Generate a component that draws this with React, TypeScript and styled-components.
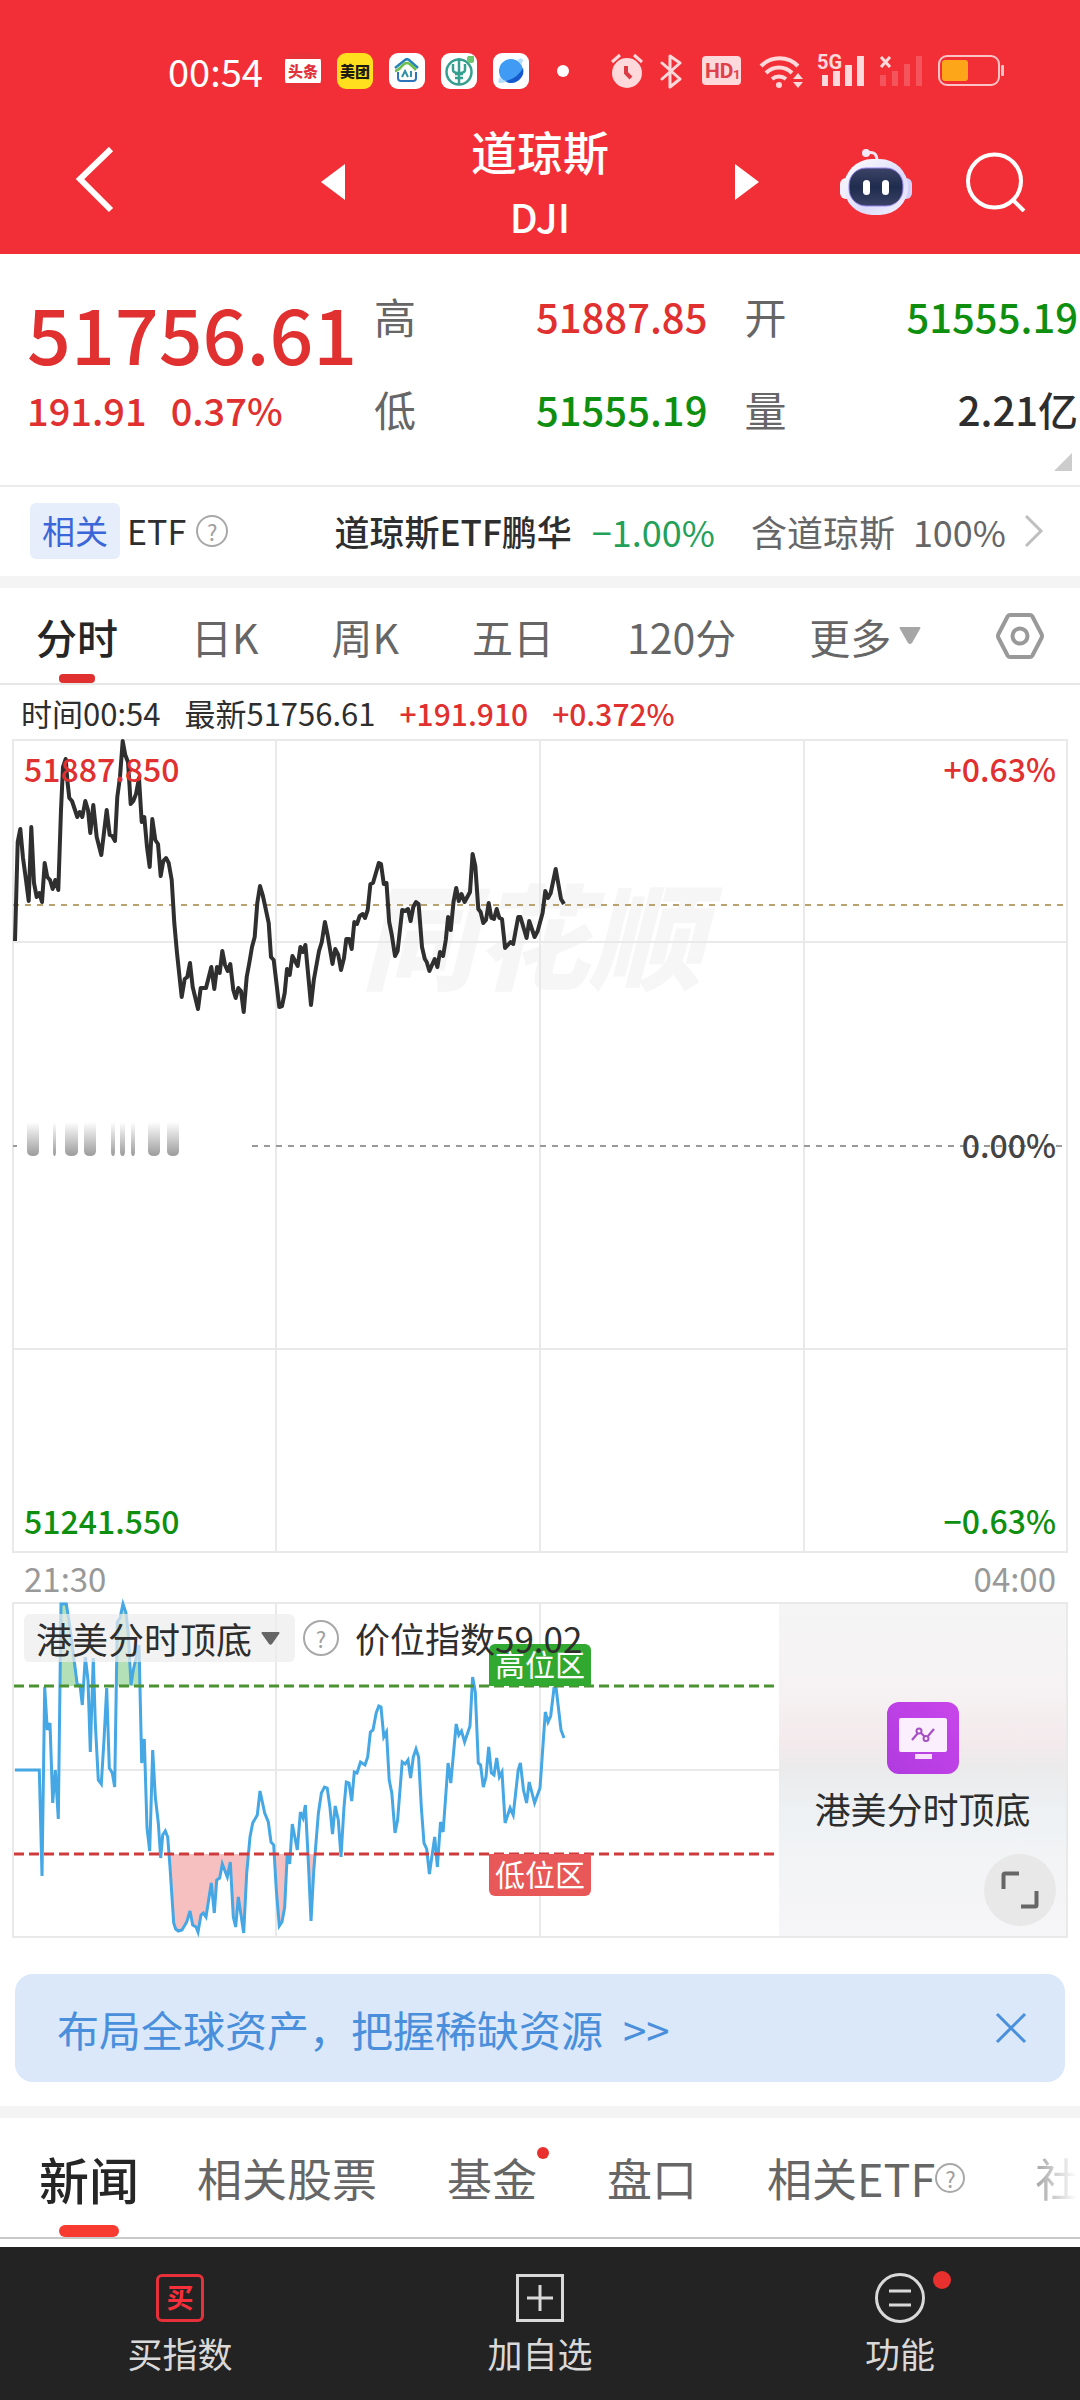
import { useState } from 'react';
import styled, { createGlobalStyle } from 'styled-components';

const GlobalStyle = createGlobalStyle`
  * {
    box-sizing: border-box;
  }

  body {
    margin: 0;
    background-color: #ffffff;
    color: #2e2e2e;
    font-family: 'Noto Sans CJK SC', sans-serif;
  }

  button,
  select {
    margin: 0;
    padding: 0;
    border: none;
    background: none;
    color: inherit;
    font: inherit;
    cursor: pointer;
  }

  a {
    color: inherit;
    text-decoration: none;
  }

  svg {
    display: block;
    flex-shrink: 0;
  }
`;

const RED = '#e03030';
const GREEN = '#0f8f0f';

const Page = styled.div`
  min-height: 100vh;
  display: flex;
  flex-direction: column;
  overflow-x: hidden;
`;

const Header = styled.header`
  background-color: #f22f37;
  color: #ffffff;
`;

const StatusBar = styled.div`
  height: 106px;
  padding: 36px 76px 0 168px;
  display: flex;
  align-items: center;
  justify-content: space-between;
`;

const StatusLeft = styled.div`
  display: flex;
  align-items: center;
  gap: 16px;
`;

const Clock = styled.span`
  width: 101px;
  font-size: 38px;
  line-height: 32px;
`;

const StatusDot = styled.span`
  width: 12px;
  height: 12px;
  margin-left: 12px;
  border-radius: 50%;
  background-color: #ffffff;
`;

const StatusRight = styled.div`
  display: flex;
  align-items: center;
  gap: 14px;
`;

const AppBadge = styled.span<{ $bg: string; $color?: string }>`
  width: 36px;
  height: 36px;
  border-radius: 9px;
  display: flex;
  align-items: center;
  justify-content: center;
  overflow: hidden;
  background: ${({ $bg }) => $bg};
  color: ${({ $color }) => $color ?? 'inherit'};
  font-size: 15px;
  font-weight: 900;
  line-height: 20px;
`;

const NavBar = styled.nav`
  height: 148px;
  padding-top: 4px;
  display: grid;
  grid-template-columns: 1fr 438px 1fr;
  align-items: center;
`;

const NavLeft = styled.div`
  padding-left: 75px;
`;

const NavCenter = styled.div`
  display: flex;
  align-items: center;
  justify-content: space-between;
`;

const NavRight = styled.div`
  padding-right: 54px;
  display: flex;
  align-items: center;
  justify-content: flex-end;
  gap: 54px;
`;

const Title = styled.h1`
  margin: 0;
  padding-top: 4px;
  font-size: 46px;
  font-weight: 500;
  line-height: 64px;
  text-align: center;
`;

const Symbol = styled.span`
  display: block;
  font-size: 40px;
  line-height: 68px;
`;

const QuotePanel = styled.section`
  position: relative;
  height: 231px;
  padding: 15px 2px 0 27px;
  display: grid;
  grid-template-columns: 347px 9fr 10fr;
`;

const PriceBlock = styled.div`
  padding-top: 12px;
  color: ${RED};
  font-weight: 500;
`;

const Price = styled.div`
  font-size: 77px;
  line-height: 102px;
`;

const Change = styled.div`
  display: flex;
  gap: 24px;
  font-size: 38px;
  line-height: 54px;
`;

const StatColumn = styled.dl`
  margin: 0;

  & + & {
    padding-left: 37px;
  }
`;

const Stat = styled.div<{ $color: string }>`
  height: 93px;
  display: flex;
  align-items: center;
  justify-content: space-between;
  font-size: 42px;

  dt {
    color: #666666;
  }

  dd {
    margin: 0;
    color: ${({ $color }) => $color};
    font-size: 40px;
    font-weight: 500;
  }
`;

const ExpandCorner = styled.span`
  position: absolute;
  right: 8px;
  bottom: 14px;
  border-left: 18px solid transparent;
  border-bottom: 18px solid #cccccc;
`;

const EtfRow = styled.a`
  height: 91px;
  padding: 0 36px 2px 30px;
  border-top: 2px solid #ebebeb;
  display: flex;
  align-items: center;
  font-size: 36px;
  color: #666666;
`;

const RelatedTag = styled.span`
  height: 56px;
  padding: 0 12px;
  margin-right: 7px;
  border-radius: 6px;
  background-color: #e6edfb;
  color: #3a66d8;
  font-size: 33px;
  line-height: 54px;
`;

const EtfLabel = styled.span`
  margin-right: 10px;
  color: #2e2e2e;
  font-size: 34px;
`;

const EtfName = styled.span`
  margin-left: auto;
  margin-right: 20px;
  color: #2e2e2e;
  font-size: 35px;
  font-weight: 500;
`;

const EtfChange = styled.span`
  margin-right: 36px;
  color: #23a15a;
`;

const EtfShare = styled.span`
  display: flex;
  gap: 18px;
  margin-right: 18px;
`;

const HelpMark = styled.span<{ $size: number }>`
  width: ${({ $size }) => $size}px;
  height: ${({ $size }) => $size}px;
  flex-shrink: 0;
  border: 2px solid #a8a8a8;
  border-radius: 50%;
  display: inline-flex;
  align-items: center;
  justify-content: center;
  color: #a0a0a0;
  font-size: 22px;
  line-height: 24px;
`;

const Band = styled.div`
  height: 12px;
  background-color: #f4f4f4;
`;

const PeriodBar = styled.div`
  height: 97px;
  padding: 0 36px 0 36px;
  border-bottom: 2px solid #e6e6e6;
  display: flex;
  justify-content: space-between;
`;

const PeriodTabs = styled.div`
  display: flex;
  gap: 73px;
`;

const PeriodTab = styled.button<{ $active?: boolean }>`
  position: relative;
  display: flex;
  align-items: center;
  gap: 8px;
  color: ${({ $active }) => ($active ? '#262626' : '#666666')};
  font-size: 41px;
  font-weight: ${({ $active }) => ($active ? 500 : 400)};
  white-space: nowrap;

  &::after {
    content: '';
    display: ${({ $active }) => ($active ? 'block' : 'none')};
    position: absolute;
    bottom: 0;
    left: 50%;
    width: 36px;
    height: 9px;
    margin-left: -18px;
    border-radius: 4px;
    background-color: ${RED};
  }
`;

const TickerLine = styled.div`
  height: 55px;
  padding-left: 21px;
  display: flex;
  align-items: center;
  gap: 24px;
  font-size: 31px;
`;

const Rise = styled.span`
  color: ${RED};
  font-size: 30px;
  font-weight: 500;
`;

const ChartBox = styled.div`
  position: relative;
  margin: 0 13px;
`;

const ChartSvg = styled.svg`
  position: relative;
  width: 100%;
  height: auto;
  overflow: visible;
`;

const Watermark = styled.div`
  position: absolute;
  left: 0;
  right: 16px;
  top: 134px;
  color: #f6f6f6;
  font-size: 114px;
  font-style: italic;
  font-weight: 900;
  line-height: 116px;
  text-align: center;
`;

const AxisLabels = styled.div`
  position: absolute;
  inset: 0;
  padding: 4px 11px;
  display: flex;
  flex-direction: column;
  justify-content: space-between;
  font-size: 32px;
  font-weight: 500;
  line-height: 48px;
`;

const AxisRow = styled.div<{ $color: string }>`
  padding-bottom: 4px;
  display: flex;
  justify-content: space-between;
  color: ${({ $color }) => $color};
`;

const TimeAxis = styled.div`
  height: 51px;
  padding: 0 24px;
  display: flex;
  align-items: center;
  justify-content: space-between;
  color: #999999;
  font-size: 33px;
  line-height: 48px;
`;

const IndicatorBar = styled.div`
  position: absolute;
  top: 11px;
  left: 11px;
  display: flex;
  align-items: center;
  gap: 8px;
`;

const IndicatorSelect = styled.div`
  position: relative;
  height: 48px;
  border-radius: 6px;
  background-color: rgba(236, 236, 236, 0.7);

  select {
    height: 48px;
    padding: 0 42px 0 12px;
    appearance: none;
    font-size: 36px;
    line-height: 48px;
  }

  svg {
    position: absolute;
    right: 15px;
    top: 18px;
    pointer-events: none;
  }
`;

const IndicatorValue = styled.span`
  margin-left: 8px;
  font-size: 35px;
  line-height: 48px;
`;

const ZoneTag = styled.span<{ $low?: boolean }>`
  position: absolute;
  top: ${({ $low }) => ($low ? 251 : 41)}px;
  left: 476px;
  height: 42px;
  padding: 0 6px;
  border-radius: ${({ $low }) => ($low ? '0 0 6px 6px' : '6px 6px 0 0')};
  background-color: ${({ $low }) => ($low ? '#e85858' : '#31a930')};
  color: #ffffff;
  font-size: 30px;
  line-height: 38px;
`;

const PromoPanel = styled.aside`
  position: absolute;
  top: 1px;
  right: 1px;
  bottom: 1px;
  width: 287px;
  padding-top: 98px;
  display: flex;
  flex-direction: column;
  align-items: center;
  gap: 8px;
  background: linear-gradient(#f5f5f6 0%, #f6f2f3 25%, #f3eaec 42%, #ebebec 50%, #edf1f3 62%, #f3f4f6 80%, #f6f5f7 100%);
  font-size: 36px;
  line-height: 52px;
`;

const ExpandButton = styled.button`
  position: absolute;
  right: 10px;
  bottom: 10px;
  width: 72px;
  height: 72px;
  border-radius: 50%;
  display: flex;
  align-items: center;
  justify-content: center;
  background-color: #e8e8e8;
`;

const Banner = styled.div`
  height: 108px;
  margin: 37px 15px 24px;
  padding: 0 38px 0 42px;
  border-radius: 18px;
  display: flex;
  align-items: center;
  justify-content: space-between;
  background-color: #dae8fa;
  color: #4a8fdc;
  font-size: 42px;

  a {
    display: flex;
    gap: 20px;
  }
`;

const NewsTabs = styled.div`
  height: 121px;
  padding-left: 39px;
  border-bottom: 2px solid #c8c8c8;
  display: flex;
  gap: 46px;
  overflow: hidden;
`;

const NewsTab = styled.button<{ $active?: boolean; $faded?: boolean }>`
  position: relative;
  padding: ${({ $active }) => ($active ? '0' : '0 12px')};
  flex-shrink: 0;
  display: flex;
  align-items: center;
  color: ${({ $active }) => ($active ? '#262626' : '#666666')};
  font-size: ${({ $active }) => ($active ? 50 : 45)}px;
  font-weight: ${({ $active }) => ($active ? 500 : 400)};
  mask-image: ${({ $faded }) =>
    $faded ? 'linear-gradient(90deg, rgba(0, 0, 0, 0.6) 12px, transparent 54px)' : 'none'};
  white-space: nowrap;

  &::after {
    content: '';
    display: ${({ $active }) => ($active ? 'block' : 'none')};
    position: absolute;
    bottom: 0;
    left: 50%;
    width: 60px;
    height: 12px;
    margin-left: -30px;
    border-radius: 6px;
    background-color: #f73b31;
  }
`;

const RedDot = styled.span<{ $size: number; $top: number; $right: number }>`
  position: absolute;
  top: ${({ $top }) => $top}px;
  right: ${({ $right }) => $right}px;
  width: ${({ $size }) => $size}px;
  height: ${({ $size }) => $size}px;
  border-radius: 50%;
  background-color: #e8302f;
`;

const Footer = styled.footer`
  flex: 1;
  min-height: 153px;
  margin-top: 8px;
  display: grid;
  grid-template-columns: repeat(3, 1fr);
  background-color: #232323;
`;

const FooterButton = styled.button`
  padding-top: 26px;
  display: flex;
  flex-direction: column;
  align-items: center;
  gap: 4px;
  color: #d9d9d9;
  font-size: 35px;
  line-height: 52px;
`;

const FooterIcon = styled.span`
  position: relative;
  width: 50px;
  height: 50px;
  display: flex;
  align-items: center;
  justify-content: center;
`;

const BuyIcon = styled.span`
  width: 48px;
  height: 48px;
  border: 3px solid #e8303a;
  border-radius: 6px;
  color: #f5303c;
  font-size: 27px;
  font-weight: 700;
  line-height: 40px;
  text-align: center;
`;

const PRICE_LINE =
  '2,201 4.7,102 7.3,89 10,118 13,140 15.7,161 18.3,87 21,143 23.7,157 26.3,153 29,162 31.7,123 34.3,137 37,140 ' +
  '39.7,149 42.3,140 45.3,150 48,70 50,27 52.7,19 54.3,40 56.3,58 59,61 64.3,77 66.7,72 69.3,77 72.3,61 75,70 ' +
  '77.3,93 80.3,65 83.7,97 88.3,115 93.7,70 96.7,95 99.3,96 102,101 104.3,57 107,37 109.7,1 112.3,15 115,22 ' +
  '117.7,64 120.3,61 123,54 126,38 128.7,82 131.3,77 134,107 136.7,127 139.3,79 142.3,100 145,104 147.7,136 ' +
  '150.3,121 153,118 155.7,123 158.7,140 161.3,183 164,213 168.7,257 171.7,239 174.3,237 177,223 179.7,247 ' +
  '185,269 187.7,248 193,248 198.3,227 201.3,249 204,227 206.7,233 209.3,211 212,225 214.7,231 217.3,224 ' +
  '220.3,250 222.7,258 225.3,248 228,251 230.7,272 233.7,237 236.3,223 239,207 241.7,197 244.3,163 247,146 ' +
  '249.7,155 252.3,167 255.7,183 258,217 260.7,220 266.3,267 269,266 271.7,253 274,229 276.7,235 279.4,216 ' +
  '284.7,226 287.4,207 290,212 292.4,205 295.4,237 298,265 300.8,240 306,211 308.8,202 311.9,182 314.6,195 ' +
  '319.5,224 322.2,209 325.3,215 328,230 331,218 333.3,199 336,199 338.7,209 341.3,182 344,184 346.7,176 ' +
  '349.8,174 352,178 354.7,170 357.4,144 360,143 363.2,132 365.8,123 368,124 370.8,144 373.5,143 376.2,182 ' +
  '378.8,195 382,216 384.6,211 389.2,170 392.2,171 395,169 397.6,181 400.3,167 403,162 405.6,164 409,207 ' +
  '411.8,219 413.7,222 416.4,231 419,225 421.7,219 424.4,227 427,212 430.1,216 432.8,200 435.1,177 437.8,190 ' +
  '440.5,162 443.2,148 445.8,161 448.5,154 451.6,162 457,152 459.6,114 462.3,126 465.3,169 467.6,172 470.3,183 ' +
  '473,180 475.7,163 478.4,178 481,179 483.7,169 486.4,178 489,179 492.1,208 497.5,202 500.2,204 505.2,177 ' +
  '507.4,177 513.6,198 516.2,181 521.6,197 524.7,191 529.6,173 532.3,151 535,158 537.7,153 542.7,129 548,159 551,164';

const INDEX_LINE =
  '2,167 26.3,167 29,273 31.7,84 34.3,127 37,120 39.7,200 42.3,167 45.3,216 48,1 53.3,1 56.3,20 64.3,82 67,82 ' +
  '69.3,102 72.3,54 75,77 77.3,149 80.3,55 82.3,120 85.3,177 88.3,181 91,137 93.7,85 96.3,165 99.3,170 101.7,184 ' +
  '104.3,19 107,15 110,1 113,10 115.3,30 118,82 120.3,67 126,42 128.7,160 131.3,136 134,225 136.7,248 139.7,147 ' +
  '142.3,194 145.3,220 147.7,255 149.7,232 152.3,228 154.7,234 157,264 160.7,320 162.7,326 165.3,328 169,327 ' +
  '173.7,319 177,308 179.7,322 183,324 185,329 188,312 190.3,310 193,314 198.3,280 201.3,310 203.7,277 206.7,275 ' +
  '209.3,261 214.3,274 217.3,259 220.3,314 222.7,324 225.3,294 230.7,330 233.7,270 237,234 239.7,220 244.3,212 ' +
  '247,188 251.7,210 255.3,219 258,239 260.7,242 263.3,287 266.3,323 269,319 271.7,304 274.3,250 276.7,261 ' +
  '279.3,221 284.3,247 287.4,209 290,215 292.4,202 295.4,260 298,318 300.8,267 305.4,210 308.4,190 311.5,184 ' +
  '314.2,185 316.9,204 319.5,231 322.2,203 325.3,217 328,254 331,204 333.3,179 336,180 338.7,198 341.3,169 ' +
  '344,170 347.5,159 352,162 354.7,154 357.4,129 360,127 363.2,110 365.8,103 368,104 370.8,134 373.5,129 ' +
  '376.2,177 378.8,190 382,230 384.6,217 389.2,159 392.2,161 395,157 397.6,175 400.3,154 403,146 405.6,154 ' +
  '408.3,204 411,240 413.7,246 416.4,271 421.7,234 424.4,264 427.5,219 430.1,229 435.1,160 437.8,180 443.2,121 ' +
  '445.8,132 448.5,128 451.6,139 457,123 459.6,74 462.3,89 465.3,160 467.6,162 470.3,184 473,174 475.7,144 ' +
  '478.4,170 481,172 483.7,155 486.4,174 489,169 492.1,220 497.1,205 500.2,212 505.2,167 507.4,160 510.5,187 ' +
  '513.6,200 516.2,179 521.6,200 527,185 532.3,109 535,119 537.7,113 541,85 543,84 548,127 551,135';

// [x, width] of the faded strokes on the zero line
const FADED_BARS = [
  [14, 12],
  [40, 3],
  [52, 13],
  [71, 12],
  [98, 4],
  [107, 5],
  [118, 4],
  [135, 12],
  [154, 12],
];

const GRID_X = [263, 527, 791];

const PERIODS = ['分时', '日K', '周K', '五日', '120分'];

function StatusIcons() {
  return (
    <StatusRight>
      <svg width="34" height="36" viewBox="1 0 34 36">
        <circle cx="17" cy="20" r="15" fill="#fdd9db" />
        <path d="M16 13v7l5 5" fill="none" stroke="#d93a44" strokeWidth="4" />
        <path d="M2 9l8-7M32 9l-8-7" stroke="#fdd9db" strokeWidth="3" />
      </svg>
      <svg width="28" height="36" viewBox="0 0 28 36">
        <path
          d="M3 10l18 16-10 8V3l10 7L3 26"
          fill="none"
          stroke="#fdd9db"
          strokeWidth="3"
          strokeLinejoin="round"
          strokeLinecap="round"
        />
      </svg>
      <svg width="44" height="30" viewBox="0 0 44 30">
        <rect x="1" width="39" height="29" rx="4" fill="#fdd9db" />
        <text x="4" y="22" fontFamily="Roboto" fontSize="21" fontWeight="700" fill="#e0404a">
          HD
        </text>
        <text x="32" y="23" fontFamily="Roboto" fontSize="13" fontWeight="700" fill="#e0404a">
          1
        </text>
      </svg>
      <svg width="44" height="36" viewBox="0 0 44 36">
        <g fill="none" stroke="#fdd9db" strokeWidth="4">
          <path d="M2 13a26 26 0 0 1 37 0" />
          <path d="M7 20a18 18 0 0 1 26 0" />
          <path d="M13 26a11 11 0 0 1 14 0" />
        </g>
        <circle cx="20" cy="32" r="3" fill="#fdd9db" />
        <path d="M34 26l5-6 5 6zM34 29h10l-5 6z" fill="#fdd9db" />
      </svg>
      <svg width="48" height="36" viewBox="0 0 48 36" overflow="visible">
        <text x="0" y="16" fontFamily="Roboto" fontSize="20" fontWeight="700" fill="#fdd9db">
          5G
        </text>
        <path d="M5 22h6v11h-6zM16 18h7v15h-7zM28 12h7v21h-7zM40 3h7v30h-7z" fill="#fdd9db" />
      </svg>
      <svg width="44" height="36" viewBox="0 0 44 36">
        <path d="M2 4l9 10M11 4l-9 10" stroke="#fdd9db" strokeWidth="3" />
        <path d="M1 22h6v11h-6zM13 18h6v15h-6zM25 11h6v22h-6zM37 3h6v30h-6z" fill="#ffffff" fillOpacity="0.18" />
      </svg>
      <svg width="67" height="34" viewBox="0 0 67 34">
        <rect x="2" y="2" width="60" height="29" rx="8" fill="none" stroke="#fbc3c6" strokeWidth="2" />
        <rect x="5" y="6" width="26" height="21" rx="3" fill="#fea61a" />
        <rect x="64" y="11" width="3" height="11" rx="1" fill="#fbc3c6" />
      </svg>
    </StatusRight>
  );
}

function Robot() {
  return (
    <svg width="72" height="68" viewBox="0 0 72 68">
      <defs>
        <linearGradient id="shell" x1="0" y1="0" x2="1" y2="1">
          <stop offset="0" stopColor="#ffffff" />
          <stop offset="0.6" stopColor="#dcdcfb" />
          <stop offset="1" stopColor="#f5f2ff" />
        </linearGradient>
        <linearGradient id="visor" x1="0" y1="0" x2="0" y2="1">
          <stop offset="0" stopColor="#3c4467" />
          <stop offset="0.5" stopColor="#1f2c4d" />
          <stop offset="1" stopColor="#3a4266" />
        </linearGradient>
      </defs>
      <path d="M27 5c8-2 10 2 10 8" fill="none" stroke="#f3e6f3" strokeWidth="3" />
      <circle cx="26" cy="5" r="4" fill="#f6e9f7" />
      <rect x="0" y="30" width="12" height="21" rx="6" fill="#f3f0fc" />
      <rect x="60" y="30" width="12" height="21" rx="6" fill="#d5d0f8" />
      <rect x="4" y="11" width="64" height="56" rx="28" fill="url(#shell)" />
      <rect x="9" y="20" width="54" height="38" rx="17" fill="url(#visor)" stroke="#9b86ef" strokeWidth="1" />
      <rect x="23" y="32" width="7" height="15" rx="3.5" fill="#ffffff" />
      <rect x="42" y="32" width="7" height="15" rx="3.5" fill="#ffffff" />
    </svg>
  );
}

function PriceChart() {
  return (
    <ChartBox>
      <Watermark>同花顺</Watermark>
      <ChartSvg viewBox="0 0 1054 812">
        <defs>
          <linearGradient id="fade" x1="0" y1="0" x2="0" y2="1">
            <stop offset="0" stopColor="#909090" stopOpacity="0" />
            <stop offset="1" stopColor="#909090" stopOpacity="0.9" />
          </linearGradient>
        </defs>
        <g stroke="#e9e9e9" strokeWidth="2" fill="none">
          <rect x="0" y="0" width="1054" height="812" />
          {GRID_X.map((x) => (
            <line key={x} x1={x} x2={x} y1="0" y2="812" />
          ))}
          <line x1="0" x2="1054" y1="202" y2="202" />
          <line x1="0" x2="1054" y1="609" y2="609" />
        </g>
        <line x1="0" x2="1050" y1="165" y2="165" stroke="#b9a26f" strokeWidth="2" strokeDasharray="6 6" />
        <line x1="0" x2="4" y1="406" y2="406" stroke="#999999" strokeWidth="2" />
        <line x1="239" x2="1050" y1="406" y2="406" stroke="#999999" strokeWidth="2" strokeDasharray="6 6" />
        {FADED_BARS.map(([x, width]) => (
          <path
            key={x}
            d={`M${x} 382h${width}v29q0 5-${width / 2} 5t-${width / 2}-5z`}
            fill="url(#fade)"
          />
        ))}
        <polyline points={PRICE_LINE} fill="none" stroke="#2f2f2f" strokeWidth="4" strokeLinejoin="round" />
      </ChartSvg>
      <AxisLabels>
        <AxisRow $color={RED}>
          <span>51887.850</span>
          <span>+0.63%</span>
        </AxisRow>
        <AxisRow $color="#444444">
          <span />
          <span>0.00%</span>
        </AxisRow>
        <AxisRow $color={GREEN}>
          <span>51241.550</span>
          <span>−0.63%</span>
        </AxisRow>
      </AxisLabels>
    </ChartBox>
  );
}

function IndicatorChart() {
  const [indicator, setIndicator] = useState('港美分时顶底');

  return (
    <ChartBox>
      <ChartSvg viewBox="0 0 1054 334">
        <defs>
          <clipPath id="high-zone">
            <rect x="46" y="0" width="24" height="83" />
            <rect x="103" y="0" width="26" height="83" />
          </clipPath>
          <clipPath id="low-zone">
            <rect x="155" y="251" width="82" height="83" />
            <rect x="260" y="251" width="15" height="83" />
            <rect x="294" y="251" width="9" height="83" />
          </clipPath>
        </defs>
        <g stroke="#e9e9e9" strokeWidth="2" fill="none">
          <rect x="0" y="0" width="1054" height="334" />
          <line x1="263" x2="263" y1="0" y2="334" />
          <line x1="527" x2="527" y1="0" y2="334" />
          <line x1="0" x2="770" y1="167" y2="167" />
        </g>
        <polygon points={`2,83 ${INDEX_LINE} 551,83`} fill="#b4e0b5" clipPath="url(#high-zone)" />
        <polygon points={`2,251 ${INDEX_LINE} 551,251`} fill="#f6c0c1" clipPath="url(#low-zone)" />
        <polyline points={INDEX_LINE} fill="none" stroke="#45a7e4" strokeWidth="3" />
        <line x1="1" x2="762" y1="83" y2="83" stroke="#4a9232" strokeWidth="3" strokeDasharray="10 5" />
        <line x1="1" x2="762" y1="251" y2="251" stroke="#cf3a3d" strokeWidth="3" strokeDasharray="10 5" />
      </ChartSvg>
      <ZoneTag>高位区</ZoneTag>
      <ZoneTag $low>低位区</ZoneTag>
      <IndicatorBar>
        <IndicatorSelect>
          <select aria-label="指标" value={indicator} onChange={(e) => setIndicator(e.target.value)}>
            <option value="港美分时顶底">港美分时顶底</option>
          </select>
          <svg width="19" height="13" viewBox="0 0 19 13">
            <path d="M1 0h17q1 1 0 2l-7 10q-1.5 1.5-3 0L1 2q-1-1 0-2z" fill="#666666" />
          </svg>
        </IndicatorSelect>
        <HelpMark $size={36}>?</HelpMark>
        <IndicatorValue>价位指数59.02</IndicatorValue>
      </IndicatorBar>
      <PromoPanel>
        <svg width="72" height="72" viewBox="0 0 72 72">
          <defs>
            <linearGradient id="promo" x1="0" y1="1" x2="1" y2="0">
              <stop offset="0" stopColor="#b03be0" />
              <stop offset="1" stopColor="#c846ea" />
            </linearGradient>
          </defs>
          <rect width="72" height="72" rx="12" fill="url(#promo)" />
          <rect x="12" y="16" width="48" height="34" rx="2" fill="#fbeffd" />
          <rect x="28" y="52" width="17" height="5" fill="#f8dffb" />
          <path d="M25 38l6-7m3 0l4 4m3-1l6-7" fill="none" stroke="#a551c4" strokeWidth="2.2" />
          <circle cx="32" cy="29" r="2.5" fill="none" stroke="#a551c4" strokeWidth="2" />
          <circle cx="39" cy="36.5" r="2.5" fill="none" stroke="#a551c4" strokeWidth="2" />
        </svg>
        <span>港美分时顶底</span>
        <ExpandButton aria-label="全屏">
          <svg width="38" height="38" viewBox="0 0 38 38">
            <path
              d="M2.5 18V4q0-1.5 1.5-1.5h14M35.5 20v14q0 1.5-1.5 1.5h-14"
              fill="none"
              stroke="#666666"
              strokeWidth="4"
            />
          </svg>
        </ExpandButton>
      </PromoPanel>
    </ChartBox>
  );
}

export default function App() {
  const [period, setPeriod] = useState('分时');
  const [bannerOpen, setBannerOpen] = useState(true);

  return (
    <Page>
      <GlobalStyle />
      <Header>
        <StatusBar>
          <StatusLeft>
            <Clock>00:54</Clock>
            <AppBadge $bg="linear-gradient(#e8323a 18%, #ffffff 18%, #ffffff 82%, #e8323a 82%)" $color="#e0323a">
              头条
            </AppBadge>
            <AppBadge $bg="#ffdf1e" $color="#1d1a10">
              美团
            </AppBadge>
            <AppBadge $bg="#ffffff">
              <svg width="26" height="26" viewBox="0 0 26 26" fill="none">
                <path d="M1 10L11 2q2-1.5 4 0l9 8" stroke="#2583b8" strokeWidth="2.5" />
                <path d="M1 13c6-1 7-8 12-8 3 0 6 4 9 7" stroke="#6cbf4a" strokeWidth="2.5" />
                <path d="M4 14v6q0 3 3 3h12q3 0 3-3v-6" stroke="#2f74b8" strokeWidth="2" />
                <path d="M8 19l3-6 3 6M17 13v6" stroke="#2f90a8" strokeWidth="2" />
              </svg>
            </AppBadge>
            <AppBadge $bg="#ffffff">
              <svg width="30" height="30" viewBox="0 0 30 30" fill="none" stroke="#35a08f">
                <circle cx="15" cy="16" r="12.5" strokeWidth="2.5" />
                <path d="M15 2v27M9 8v6q0 3 6 3t6-3V8M11 22h8M11 18h8" strokeWidth="2.5" />
                <circle cx="27" cy="3" r="4" fill="#6cc56a" stroke="none" />
              </svg>
            </AppBadge>
            <AppBadge $bg="#ffffff">
              <svg width="28" height="28" viewBox="0 0 28 28">
                <circle cx="14" cy="14" r="12" fill="#3f9bf3" />
                <path d="M26 11A12 12 0 0 1 8 24Q20 22 26 11z" fill="#1659cf" />
                <path d="M3 20q-4 6 1 6 3 0 6-2-5-1-7-4zM20 3q5-3 6 0 0 2-2 5-1-3-4-5z" fill="#b4dcfb" />
              </svg>
            </AppBadge>
            <StatusDot />
          </StatusLeft>
          <StatusIcons />
        </StatusBar>
        <NavBar>
          <NavLeft>
            <button aria-label="返回">
              <svg width="40" height="66" viewBox="0 0 40 66">
                <path d="M36 2L5 32l31 31" fill="none" stroke="#ffffff" strokeWidth="6" />
              </svg>
            </button>
          </NavLeft>
          <NavCenter>
            <button aria-label="上一个">
              <svg width="24" height="36" viewBox="0 0 24 36">
                <path d="M24 0v36L0 18z" fill="#ffffff" />
              </svg>
            </button>
            <Title>
              道琼斯
              <Symbol>DJI</Symbol>
            </Title>
            <button aria-label="下一个">
              <svg width="24" height="36" viewBox="0 0 24 36">
                <path d="M0 0v36l24-18z" fill="#ffffff" />
              </svg>
            </button>
          </NavCenter>
          <NavRight>
            <button aria-label="助手">
              <Robot />
            </button>
            <button aria-label="搜索">
              <svg width="60" height="60" viewBox="0 0 60 60" fill="none" stroke="#ffffff">
                <circle cx="28.5" cy="29" r="26.5" strokeWidth="4" />
                <path d="M47 48l11 11" strokeWidth="4" />
              </svg>
            </button>
          </NavRight>
        </NavBar>
      </Header>

      <QuotePanel>
        <PriceBlock>
          <Price>51756.61</Price>
          <Change>
            <span>191.91</span>
            <span>0.37%</span>
          </Change>
        </PriceBlock>
        <StatColumn>
          <Stat $color={RED}>
            <dt>高</dt>
            <dd>51887.85</dd>
          </Stat>
          <Stat $color={GREEN}>
            <dt>低</dt>
            <dd>51555.19</dd>
          </Stat>
        </StatColumn>
        <StatColumn>
          <Stat $color={GREEN}>
            <dt>开</dt>
            <dd>51555.19</dd>
          </Stat>
          <Stat $color="#2e2e2e">
            <dt>量</dt>
            <dd>2.21亿</dd>
          </Stat>
        </StatColumn>
        <ExpandCorner />
      </QuotePanel>

      <EtfRow href="#etf">
        <RelatedTag>相关</RelatedTag>
        <EtfLabel>ETF</EtfLabel>
        <HelpMark $size={32}>?</HelpMark>
        <EtfName>道琼斯ETF鹏华</EtfName>
        <EtfChange>−1.00%</EtfChange>
        <EtfShare>
          <span>含道琼斯</span>
          <span>100%</span>
        </EtfShare>
        <svg width="20" height="34" viewBox="0 0 20 34">
          <path d="M2 2l15 15L2 32" fill="none" stroke="#bfbfbf" strokeWidth="3" />
        </svg>
      </EtfRow>
      <Band />

      <PeriodBar>
        <PeriodTabs>
          {PERIODS.map((label) => (
            <PeriodTab key={label} $active={label === period} onClick={() => setPeriod(label)}>
              {label}
            </PeriodTab>
          ))}
          <PeriodTab>
            更多
            <svg width="22" height="18" viewBox="0 0 22 18">
              <path d="M1 0h20q1 1 0 2l-8 14q-2 2-4 0L1 2q-1-1 0-2z" fill="#a6a6a6" />
            </svg>
          </PeriodTab>
        </PeriodTabs>
        <button aria-label="设置">
          <svg width="48" height="48" viewBox="0 0 48 48" fill="none" stroke="#999999" strokeWidth="4">
            <path d="M14 3h20q1.5 0 2.3 1.3L45.5 22q1 2 0 4L36.3 43.7Q35.5 45 34 45H14q-1.5 0-2.3-1.3L2.5 26q-1-2 0-4L11.7 4.3Q12.5 3 14 3z" />
            <circle cx="24" cy="24" r="7.5" />
          </svg>
        </button>
      </PeriodBar>

      <TickerLine>
        <span>时间00:54</span>
        <span>最新51756.61</span>
        <Rise>+191.910</Rise>
        <Rise>+0.372%</Rise>
      </TickerLine>
      <PriceChart />
      <TimeAxis>
        <span>21:30</span>
        <span>04:00</span>
      </TimeAxis>
      <IndicatorChart />

      {bannerOpen && (
        <Banner>
          <a href="#global">
            <span>布局全球资产，把握稀缺资源</span>
            <span>&gt;&gt;</span>
          </a>
          <button aria-label="关闭" onClick={() => setBannerOpen(false)}>
            <svg width="32" height="32" viewBox="0 0 32 32">
              <path d="M2 2l28 28M30 2L2 30" stroke="#4a8fdc" strokeWidth="3" />
            </svg>
          </button>
        </Banner>
      )}
      <Band />

      <NewsTabs>
        <NewsTab $active>新闻</NewsTab>
        <NewsTab>相关股票</NewsTab>
        <NewsTab>
          基金
          <RedDot $size={12} $top={29} $right={0} />
        </NewsTab>
        <NewsTab>盘口</NewsTab>
        <NewsTab>
          相关ETF
          <HelpMark $size={30}>?</HelpMark>
        </NewsTab>
        <NewsTab $faded>社</NewsTab>
      </NewsTabs>

      <Footer>
        <FooterButton>
          <FooterIcon>
            <BuyIcon>买</BuyIcon>
          </FooterIcon>
          买指数
        </FooterButton>
        <FooterButton>
          <FooterIcon>
            <svg width="50" height="50" viewBox="0 0 50 50" fill="none" stroke="#d9d9d9" strokeWidth="3">
              <path d="M2.5 2.5h45v45h-45zM25 12v26M12 25h26" />
            </svg>
          </FooterIcon>
          加自选
        </FooterButton>
        <FooterButton>
          <FooterIcon>
            <svg width="50" height="50" viewBox="0 0 50 50" fill="none" stroke="#d9d9d9" strokeWidth="3">
              <circle cx="25" cy="25" r="23.5" />
              <path d="M14 18h22M14 32h22" />
            </svg>
            <RedDot $size={18} $top={-2} $right={-26} />
          </FooterIcon>
          功能
        </FooterButton>
      </Footer>
    </Page>
  );
}
